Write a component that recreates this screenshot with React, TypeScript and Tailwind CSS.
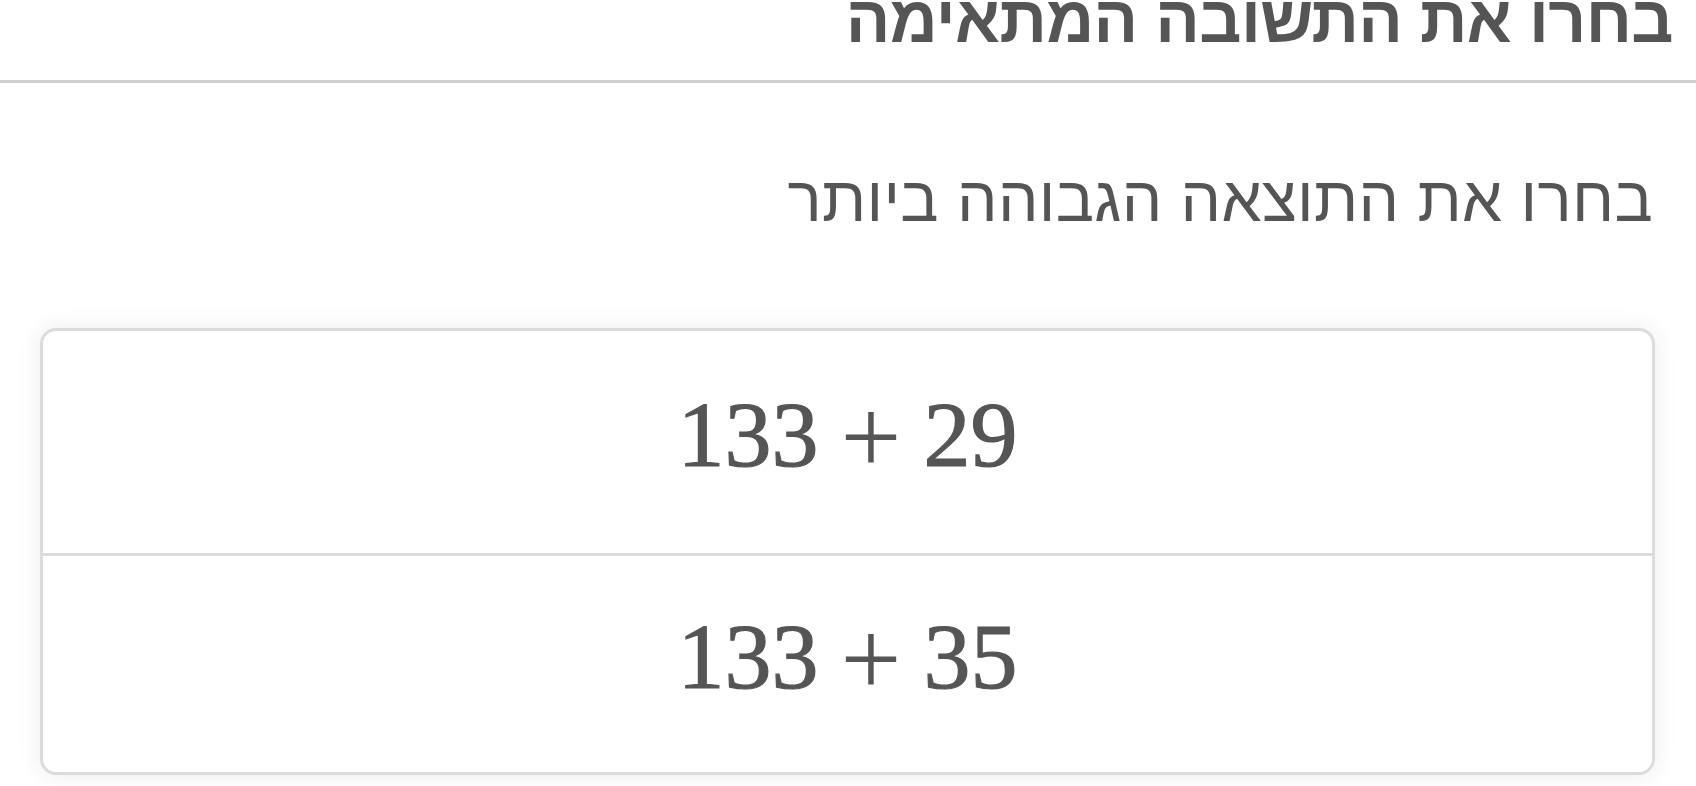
import React from 'react'

const options = [
  { id: 'a', left: '133', right: '29', height: 'h-[222px]' },
  { id: 'b', left: '133', right: '35', height: 'h-[219px]' },
]

function MathExpr({ left, right }: { left: string; right: string }) {
  return (
    <div
      dir="ltr"
      className="flex items-center leading-none text-[#555555] font-['Liberation_Serif',serif]"
    >
      <span className="text-[94px] [-webkit-text-stroke:1.2px_#555555]">{left}</span>
      <span className="text-[108px] mx-[22px] mt-[6px]">+</span>
      <span className="text-[94px] [-webkit-text-stroke:1.2px_#555555]">{right}</span>
    </div>
  )
}

export default function App() {
  return (
    <div dir="rtl" className="w-full h-[786px] bg-white overflow-hidden font-['Liberation_Sans',sans-serif] text-[#555555]">
      {/* title bar, scrolled so its top is cut */}
      <div className="h-[83px] border-b-[3px] border-[#d0d0d0] overflow-hidden pr-[23px]">
        <h1 className="text-[66px] font-bold leading-none mt-[-14px] tracking-[-0.6px]">בחרו את התשובה המתאימה</h1>
      </div>

      <div className="pr-[43px] pt-[84px]">
        <p className="text-[64px] leading-none tracking-[0.3px]">בחרו את התוצאה הגבוהה ביותר</p>
      </div>

      <div className="pl-[40px] pr-[41px] mt-[97px]">
        <div className="rounded-[16px] border-[3px] border-[#dcdcdc] bg-white shadow-[0_0_24px_rgba(0,0,0,0.08)] overflow-hidden">
          {options.map((opt, i) => (
            <button
              key={opt.id}
              type="button"
              className={`w-full ${opt.height} pb-[16px] flex items-center justify-center ${i > 0 ? 'border-t-[3px] border-[#dcdcdc]' : ''}`}
            >
              <MathExpr left={opt.left} right={opt.right} />
            </button>
          ))}
        </div>
      </div>
    </div>
  )
}
